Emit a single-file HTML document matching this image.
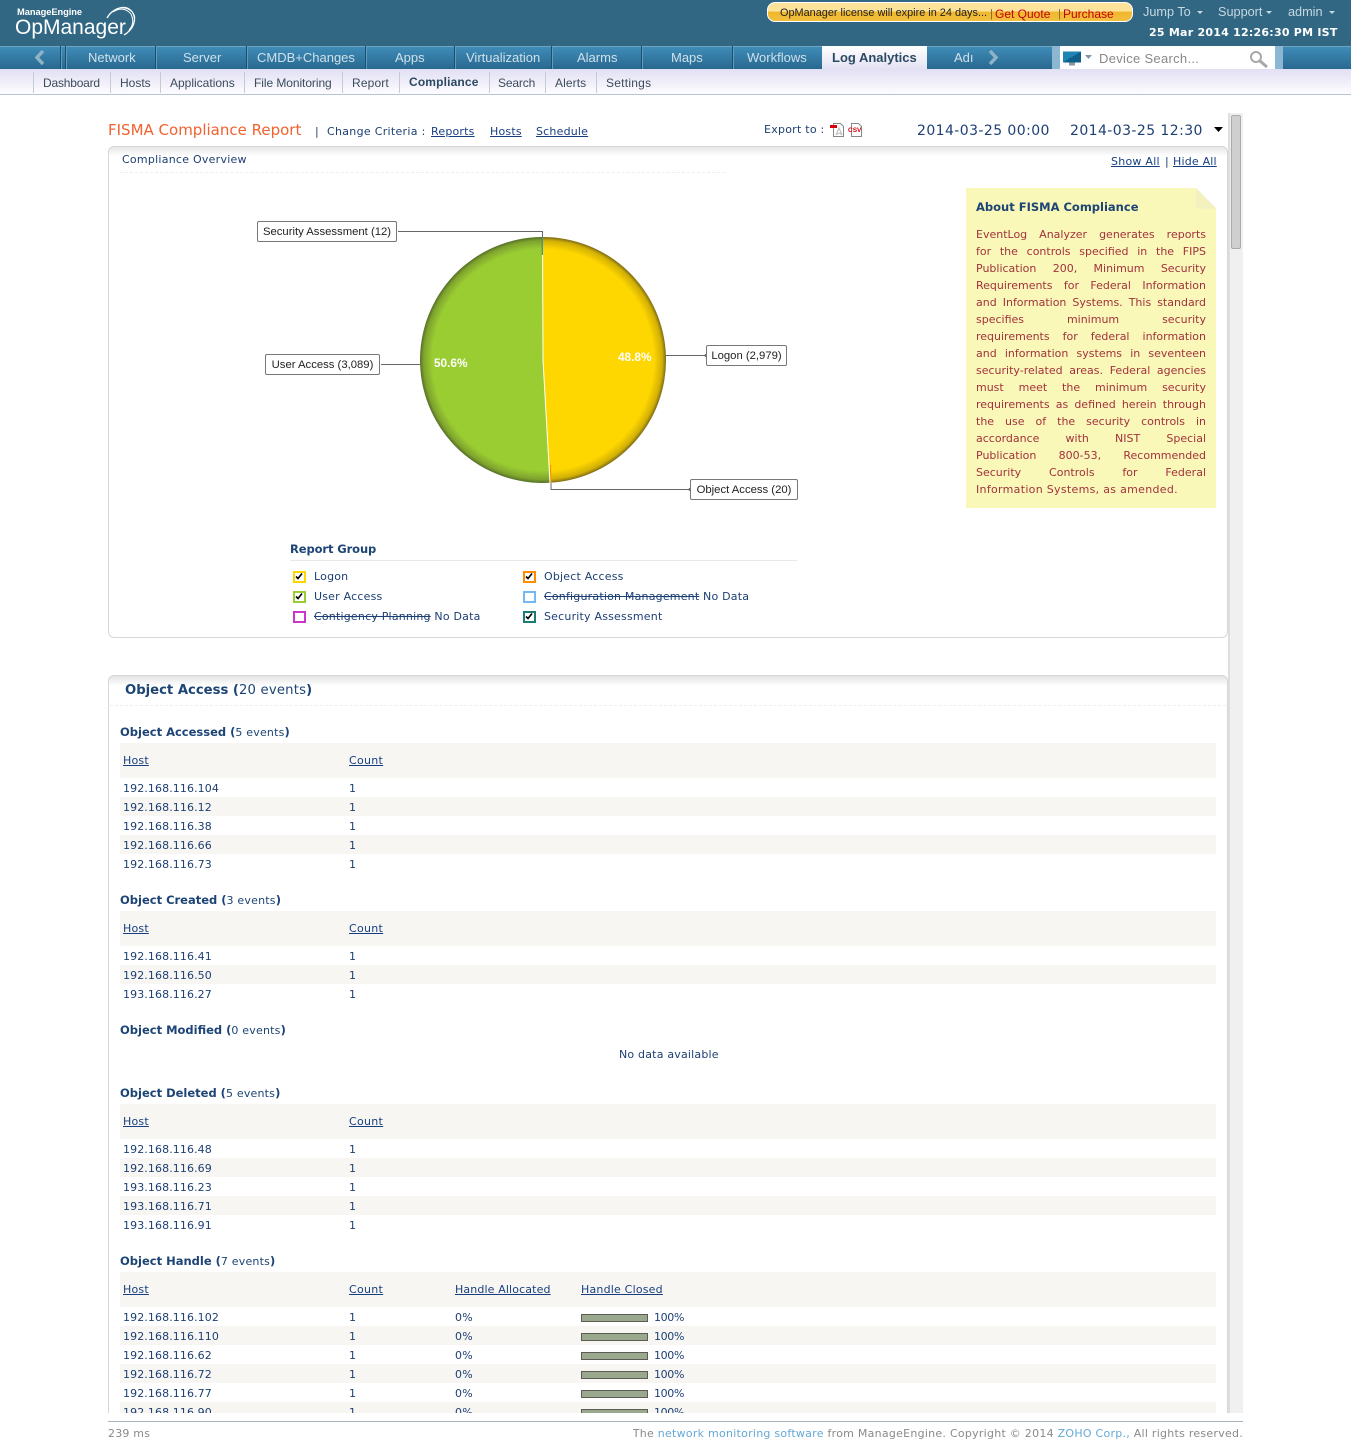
<!DOCTYPE html>
<html><head><meta charset="utf-8"><title>FISMA Compliance Report</title>
<style>
html,body{margin:0;padding:0;background:#fff}
#r{position:relative;width:1351px;height:1440px;overflow:hidden;background:#fff;font-family:"DejaVu Sans","Liberation Sans",sans-serif;font-size:11px;color:#1d3f73;letter-spacing:.2px}
#r div,#r a.a,#r svg{position:absolute}
.t{white-space:nowrap;line-height:14px;margin-top:1px}
.z{margin-top:0}
.ip{letter-spacing:.1px}
.pc{letter-spacing:-.35px}
a{color:#173f80;text-decoration:underline}
.n{color:#cfe0ea;font:13px/16px "Liberation Sans",sans-serif;top:50px;white-space:nowrap;letter-spacing:0}
.sp{background:#1b4f72;width:1px;top:46px;height:23px;box-shadow:1px 0 0 #5f9cc0}
.s{font:12px/14px "Liberation Sans",sans-serif;color:#3c4c5c;top:76px;white-space:nowrap;letter-spacing:0}
.ss{background:#c3ccd6;width:1px;top:72px;height:21px}
.ck{width:13px;height:12px;box-sizing:border-box;border:2.500px solid;background:#fff;overflow:hidden}
.ck svg{left:0;top:0}
.c{font:11.3px/20px "Liberation Sans",sans-serif;color:#222;background:#fff;border:1px solid #777;border-radius:2px;white-space:nowrap;height:19px;text-align:center;letter-spacing:0}
.band{left:120px;width:1096px;background:#f7f6f2}
.h{left:120px;font-weight:bold;color:#1c4474;font-size:11.5px;white-space:nowrap;line-height:14px;letter-spacing:0}
.h span{font-weight:normal;letter-spacing:.2px;font-size:11px}
.y{left:976px;width:230px;text-align:justify;text-align-last:justify;color:#a3323c;line-height:17px;height:17px;white-space:nowrap;font-size:11px;letter-spacing:0}
.bar{left:581px;width:65px;height:6px;background:#9aa98e;border:1px solid #5c5c54}
</style></head><body><div id="r">

<!-- top header -->
<div style="left:0;top:0;width:1351px;height:46px;background:#316783"></div>
<div class="t z" style="left:17px;top:5px;color:#fff;font:bold 9.300px/14px 'Liberation Sans',sans-serif;letter-spacing:-.05px">ManageEngine</div>
<div class="t" style="left:15px;top:13px;color:#fff;font:21px/28px 'Liberation Sans',sans-serif;letter-spacing:0">OpManager</div>
<svg style="left:104px;top:5px" width="34" height="34" viewBox="0 0 34 34" fill="none" stroke="#fff"><path d="M3 13C8 4 19 0 25 4C33 9 33 22 20 30" stroke-width="1.300"/><path d="M9 7C16 2 23 4 27 9C30 15 29 21 25 25" stroke-width="1"/><path d="M16 3C23 2 30 6 31 13" stroke-width=".8"/></svg>

<div style="left:767px;top:2px;width:364px;height:18px;border:1px solid #fff;border-radius:8px;background:linear-gradient(#fde29a 0,#fde29a 45%,#f0b62c 50%,#f2c040 100%)"></div>
<div class="t" style="left:780px;top:5px;font:10.9px/14px 'Liberation Sans',sans-serif;color:#222;letter-spacing:0">OpManager license will expire in 24 days...</div>
<div class="t" style="left:990px;top:6px;font:11px/14px 'Liberation Sans',sans-serif;color:#7d6a2c">|</div>
<div class="t" style="left:995px;top:6px;font:12px/14px 'Liberation Sans',sans-serif;color:#c4000c;letter-spacing:0">Get Quote</div>
<div class="t" style="left:1058px;top:6px;font:11px/14px 'Liberation Sans',sans-serif;color:#7d6a2c">|</div>
<div class="t" style="left:1063px;top:6px;font:12px/14px 'Liberation Sans',sans-serif;color:#c4000c;letter-spacing:0">Purchase</div>
<div class="t z" style="left:1143px;top:5px;font:12.700px/14px 'Liberation Sans',sans-serif;color:#c6d8e2;letter-spacing:0">Jump To</div>
<div class="t z" style="left:1218px;top:5px;font:12.700px/14px 'Liberation Sans',sans-serif;color:#c6d8e2;letter-spacing:0">Support</div>
<div class="t z" style="left:1288px;top:5px;font:12.700px/14px 'Liberation Sans',sans-serif;color:#c6d8e2;letter-spacing:0">admin</div>
<svg style="left:1196px;top:10px" width="8" height="5"><path d="M1 1h6L4 4z" fill="#c6d8e2"/></svg>
<svg style="left:1265px;top:10px" width="8" height="5"><path d="M1 1h6L4 4z" fill="#c6d8e2"/></svg>
<svg style="left:1328px;top:10px" width="8" height="5"><path d="M1 1h6L4 4z" fill="#c6d8e2"/></svg>
<div class="t" style="left:1149px;top:25px;font-weight:bold;font-size:11px;color:#fff;letter-spacing:.24px">25 Mar 2014 12:26:30 PM IST</div>

<!-- main nav -->
<div style="left:0;top:46px;width:1351px;height:23px;background:linear-gradient(#3f8cb8,#29688f);border-top:1px solid #6fa4bf;box-sizing:border-box"></div>
<svg style="left:33px;top:50px" width="14" height="15"><path d="M10 1L4 7.5L10 14" fill="none" stroke="#8fb2c6" stroke-width="3.5"/></svg>
<div class="sp" style="left:60px"></div><div class="sp" style="left:65px"></div><div class="sp" style="left:155px"></div><div class="sp" style="left:246px"></div><div class="sp" style="left:365px"></div><div class="sp" style="left:454px"></div><div class="sp" style="left:551px"></div><div class="sp" style="left:641px"></div><div class="sp" style="left:732px"></div>
<div class="n" style="left:88px">Network</div>
<div class="n" style="left:183px">Server</div>
<div class="n" style="left:257px">CMDB+Changes</div>
<div class="n" style="left:395px">Apps</div>
<div class="n" style="left:466px">Virtualization</div>
<div class="n" style="left:577px">Alarms</div>
<div class="n" style="left:671px">Maps</div>
<div class="n" style="left:747px">Workflows</div>
<div style="left:822px;top:46px;width:105px;height:23px;background:linear-gradient(#fff,#e4e2f4)"></div>
<div class="n" style="left:832px;color:#2b4a62;font-weight:bold">Log Analytics</div>
<div class="n" style="left:954px">Adı</div>
<svg style="left:986px;top:50px" width="14" height="15"><path d="M4 1L10 7.5L4 14" fill="none" stroke="#8fb2c6" stroke-width="3.5"/></svg>
<div style="left:1052px;top:46px;width:8px;height:23px;background:#8bb7d2"></div>
<div style="left:1060px;top:46px;width:215px;height:24px;background:#fff"></div>
<div style="left:1275px;top:46px;width:8px;height:23px;background:#8bb7d2"></div>
<svg style="left:1062px;top:50px" width="20" height="17"><rect x="1" y="1.500" width="18" height="11" fill="#1f84b4"/><path d="M1 12.500L19 1.500v11z" fill="#0e5f8b"/><rect x="7" y="12.500" width="6" height="3" fill="#8a9aa4"/></svg>
<svg style="left:1084px;top:54px" width="9" height="6"><path d="M1 1h7L4.500 5z" fill="#7e96a8"/></svg>
<div class="t z" style="left:1099px;top:51px;font:13px/15px 'Liberation Sans',sans-serif;color:#888;letter-spacing:.3px">Device Search...</div>
<svg style="left:1249px;top:50px" width="20" height="18" fill="none" stroke="#a8a8a8"><circle cx="7" cy="7" r="5" stroke-width="2"/><path d="M11 11l7 6" stroke-width="3"/></svg>

<!-- subnav -->
<div style="left:0;top:69px;width:1351px;height:25px;background:linear-gradient(#e1dff3,#fdfdff);border-bottom:1px solid #b4c4d2"></div>
<div class="ss" style="left:33px"></div><div class="ss" style="left:110px"></div><div class="ss" style="left:160px"></div><div class="ss" style="left:244px"></div><div class="ss" style="left:342px"></div><div class="ss" style="left:399px"></div><div class="ss" style="left:489px"></div><div class="ss" style="left:545px"></div><div class="ss" style="left:596px"></div>
<div class="s" style="left:43px;letter-spacing:-.2px">Dashboard</div>
<div class="s" style="left:120px">Hosts</div>
<div class="s" style="left:170px">Applications</div>
<div class="s" style="left:254px;letter-spacing:-.07px">File Monitoring</div>
<div class="s" style="left:352px;letter-spacing:.15px">Report</div>
<div class="s" style="left:409px;top:75px;font-weight:bold;color:#2b4a62;letter-spacing:.15px">Compliance</div>
<div class="s" style="left:498px;letter-spacing:-.15px">Search</div>
<div class="s" style="left:555px;letter-spacing:.1px">Alerts</div>
<div class="s" style="left:606px;letter-spacing:.25px">Settings</div>

<!-- title line -->
<div class="t z" style="left:108px;top:122px;font-size:15px;line-height:16px;color:#f0622e;letter-spacing:0">FISMA Compliance Report</div>
<div class="t" style="left:315px;top:124px">|</div>
<div class="t" style="left:327px;top:124px;letter-spacing:.3px">Change Criteria :</div>
<a class="a t" style="left:431px;top:124px">Reports</a>
<a class="a t" style="left:490px;top:124px">Hosts</a>
<a class="a t" style="left:536px;top:124px">Schedule</a>
<div class="t" style="left:764px;top:122px;letter-spacing:.25px">Export to :</div>
<svg style="left:830px;top:122px" width="16" height="16"><path d="M3.500 1.500h7l3 3v10h-10z" fill="#fff" stroke="#888"/><rect x="0" y="3" width="7" height="3" fill="#d8000c"/><path d="M6 13L9 6l3 7M6 13c2-2 4-3 6 0" fill="none" stroke="#bbb"/></svg>
<svg style="left:848px;top:122px" width="16" height="16"><path d="M3.500 1.500h7l3 3v10h-10z" fill="#fff" stroke="#888"/><text x="0" y="10" font-size="6.500" font-weight="bold" font-family="Liberation Sans" fill="#d8000c" letter-spacing="0">CSV</text></svg>
<div class="t" style="left:917px;top:122px;font-size:14px;line-height:16px;letter-spacing:.42px">2014-03-25 00:00</div>
<div class="t" style="left:1070px;top:122px;font-size:14px;line-height:16px;letter-spacing:.42px">2014-03-25 12:30</div>
<svg style="left:1214px;top:127px" width="9" height="6"><path d="M0 0h9L4.500 5z" fill="#000"/></svg>

<!-- scrollbar -->
<div style="left:1228px;top:113px;width:15px;height:1300px;background:#f0f0f0;border-left:2px solid #dedede;box-sizing:border-box"></div>
<div style="left:1231px;top:115px;width:10px;height:134px;background:#cfcfcf;border:1px solid #aaa;box-sizing:border-box;border-radius:2px"></div>

<!-- card 1 -->
<div style="left:108px;top:146px;width:1120px;height:492px;box-sizing:border-box;border:1px solid #d6d6d6;border-radius:6px;background:linear-gradient(#e6e6e6 0,#fff 9px)"></div>
<div class="t" style="left:122px;top:152px;letter-spacing:.25px">Compliance Overview</div>
<div style="left:120px;top:172px;width:605px;border-top:1px dashed #eee"></div>
<a class="a t" style="left:1111px;top:154px;letter-spacing:.25px">Show All</a>
<div class="t" style="left:1165px;top:154px">|</div>
<a class="a t" style="left:1173px;top:154px">Hide All</a>

<!-- pie -->
<svg style="left:250px;top:215px" width="560" height="295">
<defs>
<radialGradient id="g" gradientUnits="userSpaceOnUse" cx="293" cy="145" r="123"><stop offset="0" stop-color="#9acd32"/><stop offset=".9" stop-color="#9acd32"/><stop offset=".97" stop-color="#7ea32e"/><stop offset="1" stop-color="#566f25"/></radialGradient>
<radialGradient id="o" gradientUnits="userSpaceOnUse" cx="293" cy="145" r="123"><stop offset="0" stop-color="#ffd700"/><stop offset=".9" stop-color="#ffd700"/><stop offset=".97" stop-color="#d2b006"/><stop offset="1" stop-color="#7d6b14"/></radialGradient>
</defs>
<path d="M293 145L292.500 22A123 123 0 1 0 300 267.800z" fill="url(#g)"/>
<path d="M293 145L292.500 22A123 123 0 0 1 300 267.800z" fill="url(#o)"/>
<path d="M292.500 22L293 145L300 268" fill="none" stroke="#fff" stroke-width="1"/>
<path d="M292.300 22v18" stroke="#1c7b75" stroke-width="1"/>
<path d="M300.500 250l.5 18" stroke="#ff8c00" stroke-width="1"/>
<g fill="none" stroke="#666" stroke-width="1"><path d="M148 16.500H292.500V22"/><path d="M131 149.500H170"/><path d="M416 140.500H456"/><path d="M301 268V274.500H440"/></g>
<g fill="#666"><circle cx="456" cy="140.500" r="1.500"/><circle cx="440" cy="274.500" r="1.500"/></g>
<text x="184" y="152" font-family="Liberation Sans" font-weight="bold" font-size="11.800" fill="#fff" letter-spacing="0">50.6%</text>
<text x="368" y="146" font-family="Liberation Sans" font-weight="bold" font-size="11.800" fill="#fff" letter-spacing="0">48.8%</text>
</svg>
<div class="c" style="left:257px;top:221px;width:138px">Security Assessment (12)</div>
<div class="c" style="left:265px;top:354px;width:113px">User Access (3,089)</div>
<div class="c" style="left:706px;top:345px;width:79px">Logon (2,979)</div>
<div class="c" style="left:690px;top:479px;width:106px">Object Access (20)</div>

<!-- note -->
<div style="left:966px;top:188px;width:250px;height:320px;background:#f9f8b9"></div>
<svg style="left:1196px;top:188px" width="21" height="21"><path d="M0 0L20 20H0z" fill="#f3f2bd" stroke="#eeeec8"/><path d="M0 0h21v21z" fill="#fff"/></svg>
<div class="t z" style="left:976px;top:200px;font-weight:bold;font-size:11.500px;color:#1c4474;letter-spacing:0">About FISMA Compliance</div>
<div class="y" style="top:226px">EventLog Analyzer generates reports</div>
<div class="y" style="top:243px">for the controls specified in the FIPS</div>
<div class="y" style="top:260px">Publication 200, Minimum Security</div>
<div class="y" style="top:277px">Requirements for Federal Information</div>
<div class="y" style="top:294px">and Information Systems. This standard</div>
<div class="y" style="top:311px">specifies minimum security</div>
<div class="y" style="top:328px">requirements for federal information</div>
<div class="y" style="top:345px">and information systems in seventeen</div>
<div class="y" style="top:362px">security-related areas. Federal agencies</div>
<div class="y" style="top:379px">must meet the minimum security</div>
<div class="y" style="top:396px">requirements as defined herein through</div>
<div class="y" style="top:413px">the use of the security controls in</div>
<div class="y" style="top:430px">accordance with NIST Special</div>
<div class="y" style="top:447px">Publication 800-53, Recommended</div>
<div class="y" style="top:464px">Security Controls for Federal</div>
<div class="y" style="top:481px;text-align-last:left;letter-spacing:.3px">Information Systems, as amended.</div>

<!-- legend -->
<div class="t z" style="left:290px;top:542px;font-weight:bold;font-size:11.500px;color:#1c4474;letter-spacing:-.1px">Report Group</div>
<div style="left:290px;top:560px;width:507px;border-top:1px solid #e8e8e8"></div>
<div class="ck" style="left:293px;top:571px;border-color:#ffd700"><svg width="8" height="7"><path d="M1 3.500L3 5.500L7 .5" fill="none" stroke="#000" stroke-width="1.600"/></svg></div><div class="t" style="left:314px;top:569px">Logon</div>
<div class="ck" style="left:293px;top:591px;border-color:#9acd32"><svg width="8" height="7"><path d="M1 3.500L3 5.500L7 .5" fill="none" stroke="#000" stroke-width="1.600"/></svg></div><div class="t" style="left:314px;top:589px">User Access</div>
<div class="ck" style="left:293px;top:611px;border-color:#c936c9"></div><div class="t" style="left:314px;top:609px"><s>Contigency Planning</s> No Data</div>
<div class="ck" style="left:523px;top:571px;border-color:#ff8c00"><svg width="8" height="7"><path d="M1 3.500L3 5.500L7 .5" fill="none" stroke="#000" stroke-width="1.600"/></svg></div><div class="t" style="left:544px;top:569px">Object Access</div>
<div class="ck" style="left:523px;top:591px;border-color:#74b7f5"></div><div class="t" style="left:544px;top:589px"><s>Configuration Management</s> No Data</div>
<div class="ck" style="left:523px;top:611px;border-color:#1c7b75"><svg width="8" height="7"><path d="M1 3.500L3 5.500L7 .5" fill="none" stroke="#000" stroke-width="1.600"/></svg></div><div class="t" style="left:544px;top:609px">Security Assessment</div>

<!-- card 2, clipped -->
<div style="left:0;top:0;width:1228px;height:1413px;overflow:hidden">
<div style="left:108px;top:675px;width:1120px;height:745px;box-sizing:border-box;border:1px solid #d6d6d6;border-radius:6px;background:linear-gradient(#e4e4e4 0,#fff 10px)"></div>
<div class="t" style="left:125px;top:683px;font-size:13.200px;font-weight:bold;color:#1c4474;letter-spacing:0">Object Access (<span style="font-weight:normal;letter-spacing:.2px">20 events</span>)</div>
<div style="left:110px;top:705px;width:1116px;border-top:1px dashed #eee"></div>

<!-- section 1 -->
<div class="h" style="top:725px">Object Accessed (<span>5 events</span>)</div>
<div class="band" style="top:743px;height:35px"></div>
<a class="a t" style="left:123px;top:753px">Host</a><a class="a t" style="left:349px;top:753px;letter-spacing:.3px">Count</a>
<div class="band" style="top:797px;height:19px"></div><div class="band" style="top:835px;height:19px"></div>
<div class="t ip" style="left:123px;top:781px">192.168.116.104</div><div class="t" style="left:349px;top:781px">1</div>
<div class="t ip" style="left:123px;top:800px">192.168.116.12</div><div class="t" style="left:349px;top:800px">1</div>
<div class="t ip" style="left:123px;top:819px">192.168.116.38</div><div class="t" style="left:349px;top:819px">1</div>
<div class="t ip" style="left:123px;top:838px">192.168.116.66</div><div class="t" style="left:349px;top:838px">1</div>
<div class="t ip" style="left:123px;top:857px">192.168.116.73</div><div class="t" style="left:349px;top:857px">1</div>

<!-- section 2 -->
<div class="h" style="top:893px">Object Created (<span>3 events</span>)</div>
<div class="band" style="top:911px;height:35px"></div>
<a class="a t" style="left:123px;top:921px">Host</a><a class="a t" style="left:349px;top:921px;letter-spacing:.3px">Count</a>
<div class="band" style="top:965px;height:19px"></div>
<div class="t ip" style="left:123px;top:949px">192.168.116.41</div><div class="t" style="left:349px;top:949px">1</div>
<div class="t ip" style="left:123px;top:968px">192.168.116.50</div><div class="t" style="left:349px;top:968px">1</div>
<div class="t ip" style="left:123px;top:987px">193.168.116.27</div><div class="t" style="left:349px;top:987px">1</div>

<!-- section 3 -->
<div class="h" style="top:1023px">Object Modified (<span>0 events</span>)</div>
<div class="t" style="left:619px;top:1047px">No data available</div>

<!-- section 4 -->
<div class="h" style="top:1086px">Object Deleted (<span>5 events</span>)</div>
<div class="band" style="top:1104px;height:35px"></div>
<a class="a t" style="left:123px;top:1114px">Host</a><a class="a t" style="left:349px;top:1114px;letter-spacing:.3px">Count</a>
<div class="band" style="top:1158px;height:19px"></div><div class="band" style="top:1196px;height:19px"></div>
<div class="t ip" style="left:123px;top:1142px">192.168.116.48</div><div class="t" style="left:349px;top:1142px">1</div>
<div class="t ip" style="left:123px;top:1161px">192.168.116.69</div><div class="t" style="left:349px;top:1161px">1</div>
<div class="t ip" style="left:123px;top:1180px">193.168.116.23</div><div class="t" style="left:349px;top:1180px">1</div>
<div class="t ip" style="left:123px;top:1199px">193.168.116.71</div><div class="t" style="left:349px;top:1199px">1</div>
<div class="t ip" style="left:123px;top:1218px">193.168.116.91</div><div class="t" style="left:349px;top:1218px">1</div>

<!-- section 5 -->
<div class="h" style="top:1254px">Object Handle (<span>7 events</span>)</div>
<div class="band" style="top:1272px;height:35px"></div>
<a class="a t" style="left:123px;top:1282px">Host</a><a class="a t" style="left:349px;top:1282px;letter-spacing:.3px">Count</a><a class="a t" style="left:455px;top:1282px;letter-spacing:.13px">Handle Allocated</a><a class="a t" style="left:581px;top:1282px">Handle Closed</a>
<div class="band" style="top:1326px;height:19px"></div><div class="band" style="top:1364px;height:19px"></div><div class="band" style="top:1402px;height:11px"></div>

<div class="t ip" style="left:123px;top:1310px">192.168.116.102</div><div class="t" style="left:349px;top:1310px">1</div><div class="t" style="left:455px;top:1310px">0%</div><div class="bar" style="top:1314px"></div><div class="t pc" style="left:654px;top:1310px">100%</div>
<div class="t ip" style="left:123px;top:1329px">192.168.116.110</div><div class="t" style="left:349px;top:1329px">1</div><div class="t" style="left:455px;top:1329px">0%</div><div class="bar" style="top:1333px"></div><div class="t pc" style="left:654px;top:1329px">100%</div>
<div class="t ip" style="left:123px;top:1348px">192.168.116.62</div><div class="t" style="left:349px;top:1348px">1</div><div class="t" style="left:455px;top:1348px">0%</div><div class="bar" style="top:1352px"></div><div class="t pc" style="left:654px;top:1348px">100%</div>
<div class="t ip" style="left:123px;top:1367px">192.168.116.72</div><div class="t" style="left:349px;top:1367px">1</div><div class="t" style="left:455px;top:1367px">0%</div><div class="bar" style="top:1371px"></div><div class="t pc" style="left:654px;top:1367px">100%</div>
<div class="t ip" style="left:123px;top:1386px">192.168.116.77</div><div class="t" style="left:349px;top:1386px">1</div><div class="t" style="left:455px;top:1386px">0%</div><div class="bar" style="top:1390px"></div><div class="t pc" style="left:654px;top:1386px">100%</div>
<div class="t ip" style="left:123px;top:1405px;height:7px;overflow:hidden">192.168.116.90</div><div class="t" style="left:349px;top:1405px;height:7px;overflow:hidden">1</div><div class="t" style="left:455px;top:1405px;height:7px;overflow:hidden">0%</div><div class="bar" style="top:1409px;height:3px"></div><div class="t pc" style="left:654px;top:1405px;height:7px;overflow:hidden">100%</div>
</div>

<!-- footer -->
<div style="left:108px;top:1421px;width:1135px;border-top:1px solid #a6b4bc"></div>
<div class="t" style="left:108px;top:1426px;color:#8a8a8a;height:13px;overflow:hidden">239 ms</div>
<div class="t" style="right:108px;top:1426px;color:#8a8a8a;letter-spacing:.26px;height:13px;overflow:hidden">The <span style="color:#63a9d6">network monitoring software</span> from ManageEngine. Copyright © 2014 <span style="color:#63a9d6">ZOHO Corp.,</span> All rights reserved.</div>

</div></body></html>
